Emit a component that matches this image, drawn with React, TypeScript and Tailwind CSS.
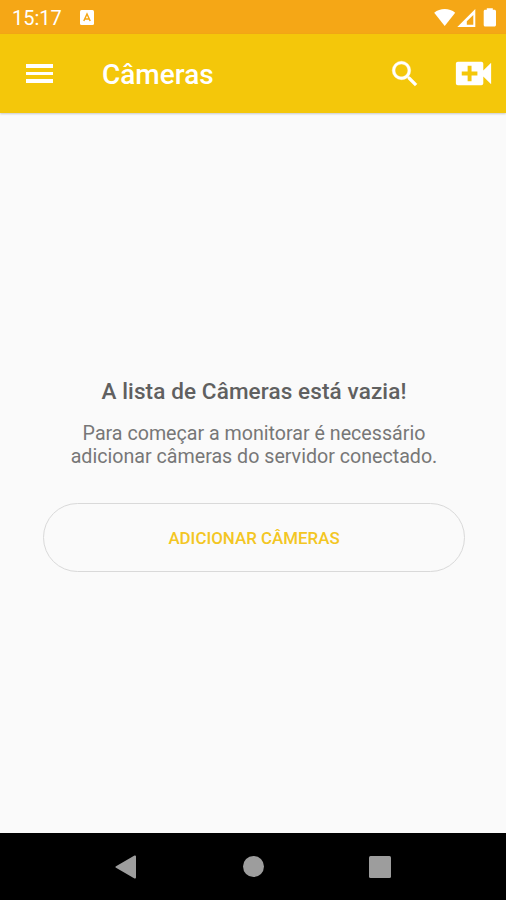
function StatusBar() {
  return (
    <div className="flex h-[34px] shrink-0 items-center bg-[#f5a716] pr-[9px] pl-[12px] text-white">
      <span className="w-[68px] pt-[2px] text-[20px] leading-[32px]">15:17</span>
      <svg className="h-[15px] w-[14px]" viewBox="0 0 14 15">
        <rect width="14" height="15" rx="1.5" fill="#fff" />
        <path d="M3.8 11 7 4l3.2 7M5 9h4" fill="none" stroke="#f5a716" strokeWidth="1.5" />
      </svg>
      <svg className="ml-auto h-[19px] w-[63px]" viewBox="434 7.5 63 19" fill="#fff">
        <path d="M434.2 12.2C440 7.4 449.5 7.4 455.2 12.2L444.7 25.6Z" />
        <path
          fillRule="evenodd"
          d="M475.3 8.5V26.5H457.3ZM473.3 14.5 466.8 20.8V24.2H473.3Z"
        />
        <path d="M486.8 9.3V7.8h6V9.3h1.6c.9 0 1.6.6 1.6 1.5V24.5c0 .9-.7 1.5-1.6 1.5h-9.2c-.9 0-1.5-.6-1.5-1.5V10.8c0-.9.6-1.5 1.5-1.5Z" />
      </svg>
    </div>
  );
}

function Toolbar() {
  return (
    <header className="z-10 flex h-[79px] shrink-0 items-center bg-[#f4c70a] pl-[26px] text-white shadow-[0_1px_2px_rgba(0,0,0,0.2)]">
      <button className="flex w-[76px] flex-col gap-[4px]" aria-label="Menu">
        <span className="h-[3.5px] w-[27px] bg-white" />
        <span className="h-[3.5px] w-[27px] bg-white" />
        <span className="h-[3.5px] w-[27px] bg-white" />
      </button>
      <h1 className="pt-[2px] text-[28px] leading-[33px] font-medium">Câmeras</h1>
      <button className="mr-[28px] ml-auto" aria-label="Buscar">
        <svg className="h-[34px] w-[34px]" viewBox="0 0 24 24" fill="currentColor" stroke="currentColor" strokeWidth="0.3">
          <path d="M15.5 14h-.79l-.28-.27A6.47 6.47 0 0 0 16 9.5 6.5 6.5 0 1 0 9.5 16c1.61 0 3.09-.59 4.23-1.57l.27.28v.79l5 4.99L20.49 19l-4.99-5zm-6 0C7.01 14 5 11.99 5 9.5S7.01 5 9.5 5 14 7.01 14 9.5 11.99 14 9.5 14z" />
        </svg>
      </button>
      <button className="mr-[9px]" aria-label="Nova câmera">
        <svg className="h-[47px] w-[47px]" viewBox="0 0 24 24" fill="currentColor">
          <path d="M17 10.5V7c0-.55-.45-1-1-1H4c-.55 0-1 .45-1 1v10c0 .55.45 1 1 1h12c.55 0 1-.45 1-1v-3.5l4 4v-11l-4 4zM14 13h-3v3H9v-3H6v-2h3V8h2v3h3v2z" />
        </svg>
      </button>
    </header>
  );
}

function NavigationBar() {
  return (
    <nav className="flex h-[67px] shrink-0 items-center justify-between bg-black px-[115px]">
      <svg className="h-[24px] w-[21px]" viewBox="0 0 21 24" fill="#9d9d9d">
        <path d="M19.5.6c.8-.4 1.500 0 1.500.8V22.600c0 .8-.7 1.200-1.500.8L1 12.800c-.7-.4-.7-1.200 0-1.600Z" />
      </svg>
      <span className="ml-px h-[21px] w-[21px] rounded-full bg-[#9d9d9d]" />
      <span className="h-[22px] w-[22px] rounded-[1.5px] bg-[#9d9d9d]" />
    </nav>
  );
}

export default function App() {
  return (
    <div className="flex h-[900px] w-[506px] flex-col overflow-hidden bg-[#fafafa] font-[Roboto,sans-serif]">
      <StatusBar />
      <Toolbar />
      <main className="flex flex-1 flex-col items-center pt-[264px] pr-[41px] pl-[43px] text-center">
        <h2 className="text-[22.5px] leading-[28px] font-medium tracking-[0.12px] whitespace-nowrap text-[#606060]">
          A lista de Câmeras está vazia!
        </h2>
        <p className="mt-[17px] text-[19.65px] leading-[23px] whitespace-nowrap text-[#777777]">
          Para começar a monitorar é necessário
          <br />
          adicionar câmeras do servidor conectado.
        </p>
        <button className="mt-[35px] h-[69px] w-full rounded-full border border-[#d9d9d9] pt-[2px] text-[16.9px] font-medium text-[#f3c623]">
          ADICIONAR CÂMERAS
        </button>
      </main>
      <NavigationBar />
    </div>
  );
}
